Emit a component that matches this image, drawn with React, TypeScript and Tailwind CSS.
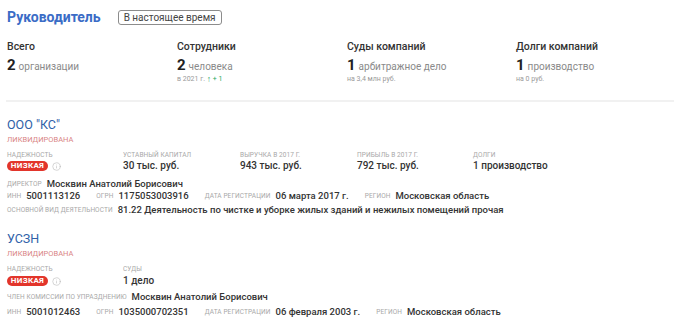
import { Info } from "lucide-react"

function Stat({ label, num, text, sub }: { label: string; num: string; text: string; sub: React.ReactNode }) {
  return (
    <div className="flex flex-col">
      <div className="h-[14px] flex items-center text-[10.5px] font-medium text-[#333]">{label}</div>
      <div className="mt-[2px] h-[18px] flex items-baseline gap-[3px]">
        <span className="text-[15px] font-bold text-[#222] leading-[18px]">{num}</span>
        <span className="text-[10px] text-[#8a8a8a]">{text}</span>
      </div>
      <div className="h-[10px] flex items-center text-[7px] text-[#9a9a9a]">{sub}</div>
    </div>
  )
}

function Cap({ children }: { children: React.ReactNode }) {
  return <span className="block text-[6.5px] leading-[9px] uppercase text-[#a8a8a8] tracking-[0.1px]">{children}</span>
}

function Field({ label, value, className = "" }: { label: string; value: string; className?: string }) {
  return (
    <div className={"flex items-center gap-[5px] " + className}>
      <Cap>{label}</Cap>
      <span className="text-[9.5px] leading-[12px] font-medium text-[#333]">{value}</span>
    </div>
  )
}

function Risk() {
  return (
    <div className="flex items-center gap-[4px]">
      <span className="h-[10px] w-[41px] rounded-full bg-[#e2352b] text-white text-[8px] leading-[10px] font-bold flex items-center justify-center tracking-[0.3px]">
        НИЗКАЯ
      </span>
      <Info className="w-[9px] h-[9px] text-[#b5b5b5]" strokeWidth={1.5} />
    </div>
  )
}

export default function App() {
  return (
    <div className="w-[680px] h-[329px] overflow-hidden bg-white font-['Roboto',sans-serif]">
      {/* header */}
      <div className="pt-[7px] px-[7px] h-[27px] flex items-center gap-[17px]">
        <h1 className="text-[14px] font-bold text-[#3a6cc6] leading-[20px]">Руководитель</h1>
        <span className="h-[15px] px-[5px] border border-[#8c8c8c] rounded-[3px] text-[10px] text-[#444] flex items-center">
          В настоящее время
        </span>
      </div>

      <div className="mt-[13px] px-[7px] flex">
        <div className="w-[170px]">
          <Stat label="Всего" num="2" text="организации" sub="" />
        </div>
        <div className="w-[170px]">
          <Stat
            label="Сотрудники"
            num="2"
            text="человека"
            sub={
              <>
                в 2021 г.&nbsp;<span className="text-[#27a85f] font-bold text-[8.5px]">↑</span>
                <span className="text-[#27a85f]">&nbsp;+ 1</span>
              </>
            }
          />
        </div>
        <div className="w-[169px]">
          <Stat label="Суды компаний" num="1" text="арбитражное дело" sub="на 3,4 млн руб." />
        </div>
        <div className="flex-1">
          <Stat label="Долги компаний" num="1" text="производство" sub="на 0 руб." />
        </div>
      </div>

      <div className="mt-[16px] mx-[6px] h-[2px] bg-[#f1f1f1]" />

      {/* ООО КС */}
      <div className="px-[7px]">
        <div className="mt-[14px] h-[18px] flex items-center text-[12.5px] text-[#2f5fa8]">ООО "КС"</div>
        <div className="mt-[1px] h-[9px] flex items-center text-[7.5px] leading-[9px] text-[#d98585]">ЛИКВИДИРОВАНА</div>
        <div className="mt-[7px] h-[9px] flex items-center">
          <div className="w-[116px]"><Cap>Надежность</Cap></div>
          <div className="w-[117px]"><Cap>Уставный капитал</Cap></div>
          <div className="w-[117px]"><Cap>Выручка в 2017 г.</Cap></div>
          <div className="w-[116px]"><Cap>Прибыль в 2017 г.</Cap></div>
          <div><Cap>Долги</Cap></div>
        </div>
        <div className="h-[12px] flex items-center text-[10px] leading-[12px] font-medium text-[#333]">
          <div className="w-[116px]"><Risk /></div>
          <div className="w-[117px]">30 тыс. руб.</div>
          <div className="w-[117px]">943 тыс. руб.</div>
          <div className="w-[116px]">792 тыс. руб.</div>
          <div>1 производство</div>
        </div>
        <Field className="mt-[6px] h-[12px]" label="Директор" value="Москвин Анатолий Борисович" />
        <div className="h-[12px] flex items-center gap-[16px]">
          <Field label="ИНН" value="5001113126" />
          <Field label="ОГРН" value="1175053003916" />
          <Field label="Дата регистрации" value="06 марта 2017 г." />
          <Field label="Регион" value="Московская область" />
        </div>
        <Field
          className="mt-[2px] h-[12px]"
          label="Основной вид деятельности"
          value="81.22 Деятельность по чистке и уборке жилых зданий и нежилых помещений прочая"
        />
      </div>

      {/* УСЗН */}
      <div className="px-[7px]">
        <div className="mt-[14px] h-[18px] flex items-center text-[12.5px] text-[#2f5fa8]">УСЗН</div>
        <div className="mt-[1px] h-[9px] flex items-center text-[7.5px] leading-[9px] text-[#d98585]">ЛИКВИДИРОВАНА</div>
        <div className="mt-[7px] h-[9px] flex items-center">
          <div className="w-[116px]"><Cap>Надежность</Cap></div>
          <div><Cap>Суды</Cap></div>
        </div>
        <div className="mt-[1px] h-[12px] flex items-center text-[10px] leading-[12px] font-medium text-[#333]">
          <div className="w-[116px]"><Risk /></div>
          <div>1 дело</div>
        </div>
        <Field className="mt-[4px] h-[12px]" label="Член комиссии по упразднению" value="Москвин Анатолий Борисович" />
        <div className="mt-[3px] h-[12px] flex items-center gap-[16px]">
          <Field label="ИНН" value="5001012463" />
          <Field label="ОГРН" value="1035000702351" />
          <Field label="Дата регистрации" value="06 февраля 2003 г." />
          <Field label="Регион" value="Московская область" />
        </div>
      </div>
    </div>
  )
}
